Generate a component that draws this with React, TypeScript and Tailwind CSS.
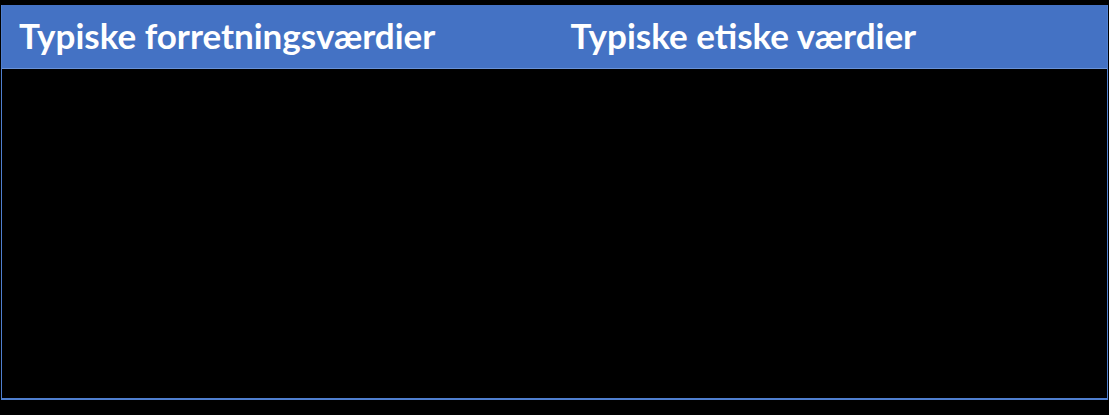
export default function App() {
  return (
    <div className="w-[1109px] h-[415px] bg-black pt-[5px] pl-[1px]" style={{ fontFamily: "Lato, 'Open Sans', sans-serif" }}>
      <div className="w-[1107px] h-[395px] border-l border-r border-b-2 border-[#4f7fcf] flex flex-col">
        <div className="h-[64px] bg-[#4472c4] border-b border-[#6a93d8] grid grid-cols-2 items-center">
          <div className="pl-[17px] pb-[3px] text-white font-bold text-[35px] leading-none">Typiske forretningsværdier</div>
          <div className="pl-[16px] pb-[3px] text-white font-bold text-[35px] leading-none">Typiske etiske værdier</div>
        </div>
        <div className="flex-1 grid grid-cols-2">
          <div />
          <div />
        </div>
      </div>
    </div>
  );
}
